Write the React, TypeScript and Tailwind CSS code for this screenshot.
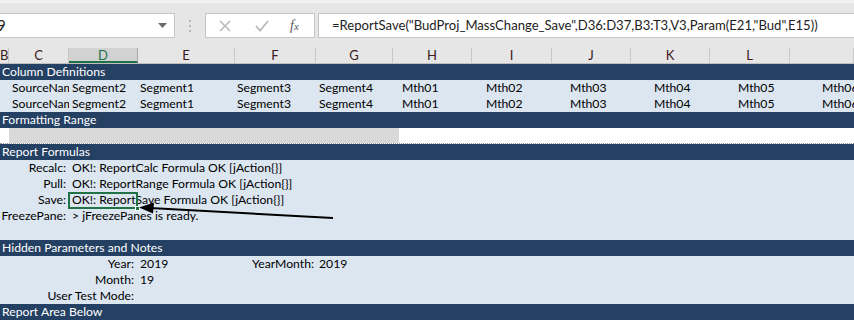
import React from "react";

const F = "font-['Lato','Open_Sans',sans-serif]";

const hdrCols: [string, number][] = [
  ["B", 9], ["C", 60], ["D", 69], ["E", 97], ["F", 81], ["G", 77], ["H", 79], ["I", 80], ["J", 79], ["K", 79], ["L", 80], ["", 64],
];

function Title({ text }: { text: string }) {
  return (
    <div className="h-[16px] bg-[#244062] text-white leading-[16px] pl-[2px] whitespace-nowrap">{text}</div>
  );
}

function ColDefRow() {
  const mths = ["Mth01", "Mth02", "Mth03", "Mth04", "Mth05", "Mth06"];
  return (
    <div className="h-[16px] flex bg-[#dce6f1] leading-[16px] whitespace-nowrap overflow-hidden">
      <div className="w-[9px] shrink-0" />
      <div className="w-[60px] shrink-0 overflow-hidden pl-[3px]">SourceName</div>
      <div className="w-[69px] shrink-0 pl-[3px]">Segment2</div>
      <div className="w-[97px] shrink-0 pl-[2px]">Segment1</div>
      <div className="w-[81px] shrink-0 pl-[2px]">Segment3</div>
      <div className="w-[84px] shrink-0 pl-[3px]">Segment4</div>
      {mths.map((m) => (
        <div key={m} className="w-[84px] shrink-0 pl-[2px]">
          {m}
        </div>
      ))}
    </div>
  );
}

function FormulaRow({ label, value, selected }: { label: string; value: string; selected?: boolean }) {
  return (
    <div className="h-[16px] flex bg-[#dce6f1] leading-[16px] whitespace-nowrap">
      <div className="w-[69px] shrink-0 flex justify-end pr-[3px]">{label}</div>
      <div className="w-[69px] shrink-0 pl-[3px] relative">
        {value}
        {selected && (
          <div className="absolute left-[-1px] top-0 w-[70px] h-[17px] border-2 border-[#217346]">
            <div className="absolute right-[-4px] bottom-[-4px] w-[5px] h-[5px] bg-[#217346] border border-white" />
          </div>
        )}
      </div>
      <div className="flex-1" />
    </div>
  );
}

function ParamRow({ label, value, label2, value2 }: { label: string; value: string; label2?: string; value2?: string }) {
  return (
    <div className="h-[16px] flex bg-[#dce6f1] leading-[16px] whitespace-nowrap">
      <div className="w-[138px] shrink-0 flex justify-end pr-[4px]">{label}</div>
      <div className="w-[97px] shrink-0 pl-[2px]">{value}</div>
      <div className="w-[81px] shrink-0 flex justify-end pr-[2px]">{label2 ?? ""}</div>
      <div className="w-[84px] shrink-0 pl-[3px]">{value2 ?? ""}</div>
      <div className="flex-1" />
    </div>
  );
}

export default function App() {
  return (
    <div className={`w-[854px] h-[333px] overflow-hidden bg-white relative text-[12.2px] text-black ${F}`}>
      {/* Toolbar */}
      <div className="h-[48px] bg-[#e6e6e6] border-t-[3px] border-[#f2f2f2] flex items-start pt-[10px]">
        <div className="w-[175px] shrink-0 h-[25px] bg-white border border-[#c6c6c6] border-l-0 flex items-center justify-between pr-[7px]">
          <span className="text-[15px] ml-[-3px] text-[#222]">9</span>
          <svg width="9" height="6" viewBox="0 0 9 6"><path d="M0 0 L9 0 L4.5 5 Z" fill="#6b6b6b" /></svg>
        </div>
        <div className="w-[30px] shrink-0 h-[25px] flex flex-col items-center justify-center gap-[3px]">
          <div className="w-[2px] h-[2px] bg-[#b4b4b4]" />
          <div className="w-[2px] h-[2px] bg-[#b4b4b4]" />
          <div className="w-[2px] h-[2px] bg-[#b4b4b4]" />
        </div>
        <div className="w-[110px] shrink-0 h-[25px] bg-white border border-[#c6c6c6] flex items-center">
          <svg className="ml-[13px]" width="12" height="12" viewBox="0 0 12 12">
            <path d="M1 1 L11 11 M11 1 L1 11" stroke="#b8b8b8" strokeWidth="1.5" />
          </svg>
          <svg className="ml-[24px]" width="14" height="12" viewBox="0 0 14 12">
            <path d="M1 6 L5 10.5 L13 1" stroke="#b8b8b8" strokeWidth="1.8" fill="none" />
          </svg>
          <span className="ml-[21px] text-[14px] italic text-[#5a5a5a] font-['Liberation_Serif',serif]">
            f<span className="text-[11px]">x</span>
          </span>
        </div>
        <div className="ml-[3px] flex-1 min-w-0 overflow-hidden h-[25px] bg-white border border-[#c6c6c6] border-r-0 flex items-center pl-[13px] text-[13.1px] text-[#222] whitespace-nowrap">
          =ReportSave("BudProj_MassChange_Save",D36:D37,B3:T3,V3,Param(E21,"Bud",E15))
        </div>
      </div>
      {/* Column header */}
      <div className="h-[16px] flex bg-[#e6e6e6] border-b border-[#bfbfbf] text-[13px] leading-[15px] overflow-hidden">
        {hdrCols.map(([l, w]) => (
          <div
            key={l + w}
            className={
              l === "D"
                ? "shrink-0 text-center bg-[#d2d2d2] text-[#217346] border-b-2 border-[#217346] border-r border-r-[#ababab]"
                : "shrink-0 text-center text-[#3a1a1a] border-r border-[#c8c8c8]"
            }
            style={{ width: w }}
          >
            {l}
          </div>
        ))}
      </div>
      {/* Sheet */}
      <Title text="Column Definitions" />
      <ColDefRow />
      <ColDefRow />
      <Title text="Formatting Range" />
      <div className="h-[16px] flex border-b border-dotted border-[#9a9a9a]">
        <div className="w-[9px]" />
        <div className="w-[390px] h-[15px] bg-[#d9d9d9]" />
      </div>
      <Title text="Report Formulas" />
      <FormulaRow label="Recalc:" value="OK!: ReportCalc Formula OK [jAction{}]" />
      <FormulaRow label="Pull:" value="OK!: ReportRange Formula OK [jAction{}]" />
      <FormulaRow label="Save:" value="OK!: ReportSave Formula OK [jAction{}]" selected />
      <FormulaRow label="FreezePane:" value="> jFreezePanes is ready." />
      <div className="h-[16px] bg-[#dce6f1]" />
      <Title text="Hidden Parameters and Notes" />
      <ParamRow label="Year:" value="2019" label2="YearMonth:" value2="2019" />
      <ParamRow label="Month:" value="19" />
      <ParamRow label="User Test Mode:" value="" />
      <Title text="Report Area Below" />

      {/* Arrow annotation */}
      <svg className="absolute left-0 top-0 pointer-events-none" width="854" height="333">
        <line x1="333" y1="218" x2="150" y2="208" stroke="#000" strokeWidth="2" />
        <path d="M139 207.5 L154 202.5 L153 213.5 Z" fill="#000" />
      </svg>
    </div>
  );
}
